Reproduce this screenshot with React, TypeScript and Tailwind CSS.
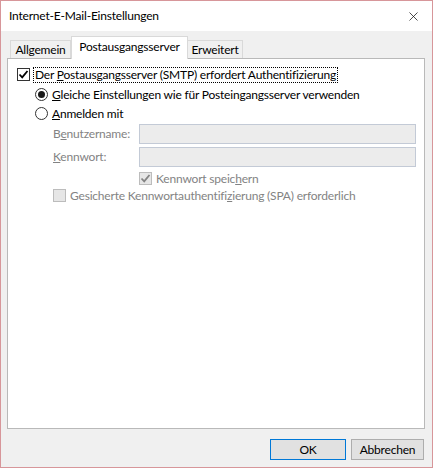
import { X } from "lucide-react";

const font = { fontFamily: "Lato, 'Noto Sans', sans-serif" };

function Check({ disabled = false, checked = false }: { disabled?: boolean; checked?: boolean }) {
  return (
    <span
      className={
        "inline-flex h-[13px] w-[13px] shrink-0 items-center justify-center border " +
        (disabled ? "border-[#bcbcbc] bg-[#e6e6e6]" : "border-[#333333] bg-white")
      }
    >
      {checked && (
        <svg width="11" height="11" viewBox="0 0 11 11">
          <path
            d="M1.5 5.5 L4.2 8.3 L9.5 2"
            fill="none"
            stroke={disabled ? "#838383" : "#000"}
            strokeWidth="1.8"
          />
        </svg>
      )}
    </span>
  );
}

function Radio({ selected = false }: { selected?: boolean }) {
  return (
    <span className="inline-flex h-[13px] w-[13px] shrink-0 items-center justify-center rounded-full border border-[#333333] bg-white">
      {selected && <span className="h-[7px] w-[7px] rounded-full bg-[#1a1a1a]" />}
    </span>
  );
}

export default function App() {
  return (
    <div
      className="flex h-[468px] w-[433px] flex-col border border-[#d7969a] bg-[#f0f0f0] text-[12px] leading-none tracking-[-0.2px] text-black"
      style={font}
    >
      {/* Title bar */}
      <div className="flex h-[30px] shrink-0 items-center justify-between bg-white pl-[8px] pr-[11px]">
        <span className="text-[12px]">Internet-E-Mail-Einstellungen</span>
        <X size={15} strokeWidth={1.2} color="#111" />
      </div>

      <div className="flex flex-1 flex-col pl-[6px] pr-[7px] pt-[5px]">
        {/* Tabs */}
        <div className="relative z-10 flex h-[22px] items-end pl-[3px]">
          <div className="flex h-[18px] w-[61px] items-center justify-center border border-b-0 border-[#d9d9d9] bg-[#f0f0f0]">
            Allgemein
          </div>
          <div className="-mb-px flex h-[23px] w-[117px] items-center justify-center border border-b-0 border-[#d9d9d9] bg-white pb-[2px]">
            Postausgangsserver
          </div>
          <div className="flex h-[18px] w-[55px] items-center justify-center border border-b-0 border-l-0 border-[#d9d9d9] bg-[#f0f0f0]">
            Erweitert
          </div>
        </div>

        {/* Panel */}
        <div className="flex h-[371px] flex-col border border-[#b9b9b9] bg-white pl-[9px] pt-[8px]">
          <div className="flex h-[15px] items-center gap-[3px]">
            <Check checked />
            <span className="flex h-[16px] items-center border border-dotted border-black px-px">
              <span>
                Der <u>P</u>ostausgangsserver (SMTP) erfordert Authentifizierung
              </span>
            </span>
          </div>

          <div className="mt-[6px] flex flex-col gap-[6px] pl-[18px]">
            <div className="flex h-[13px] items-center gap-[4px]">
              <Radio selected />
              <span>
                <u>G</u>leiche Einstellungen wie für Posteingangsserver verwenden
              </span>
            </div>
            <div className="flex h-[13px] items-center gap-[4px]">
              <Radio />
              <span>
                <u>A</u>nmelden mit
              </span>
            </div>
          </div>

          <div className="mt-[4px] flex flex-col pl-[36px] text-[#838383]">
            <div className="flex h-[20px] items-center">
              <span className="w-[86px]">
                B<u>e</u>nutzername:
              </span>
              <div className="h-[20px] w-[277px] border border-[#c3cad6] bg-[#ececec]" />
            </div>
            <div className="mt-[3px] flex h-[20px] items-center">
              <span className="w-[86px]">
                <u>K</u>ennwort:
              </span>
              <div className="h-[20px] w-[277px] border border-[#c3cad6] bg-[#ececec]" />
            </div>
            <div className="mt-[5px] flex h-[13px] items-center gap-[4px] pl-[86px]">
              <Check disabled checked />
              <span>
                Kennwort speic<u>h</u>ern
              </span>
            </div>
            <div className="mt-[4px] flex h-[13px] items-center gap-[4px]">
              <Check disabled />
              <span>
                Gesicherte Kennwortauthentifi<u>z</u>ierung (SPA) erforderlich
              </span>
            </div>
          </div>
        </div>

        {/* Buttons */}
        <div className="mt-[10px] flex justify-end gap-[5px] pr-px">
          <button className="flex h-[21px] w-[76px] items-center justify-center border border-[#0078d7] bg-[#e1e1e1]">
            OK
          </button>
          <button className="flex h-[21px] w-[73px] items-center justify-center border border-[#adadad] bg-[#e1e1e1]">
            Abbrechen
          </button>
        </div>
      </div>
    </div>
  );
}
